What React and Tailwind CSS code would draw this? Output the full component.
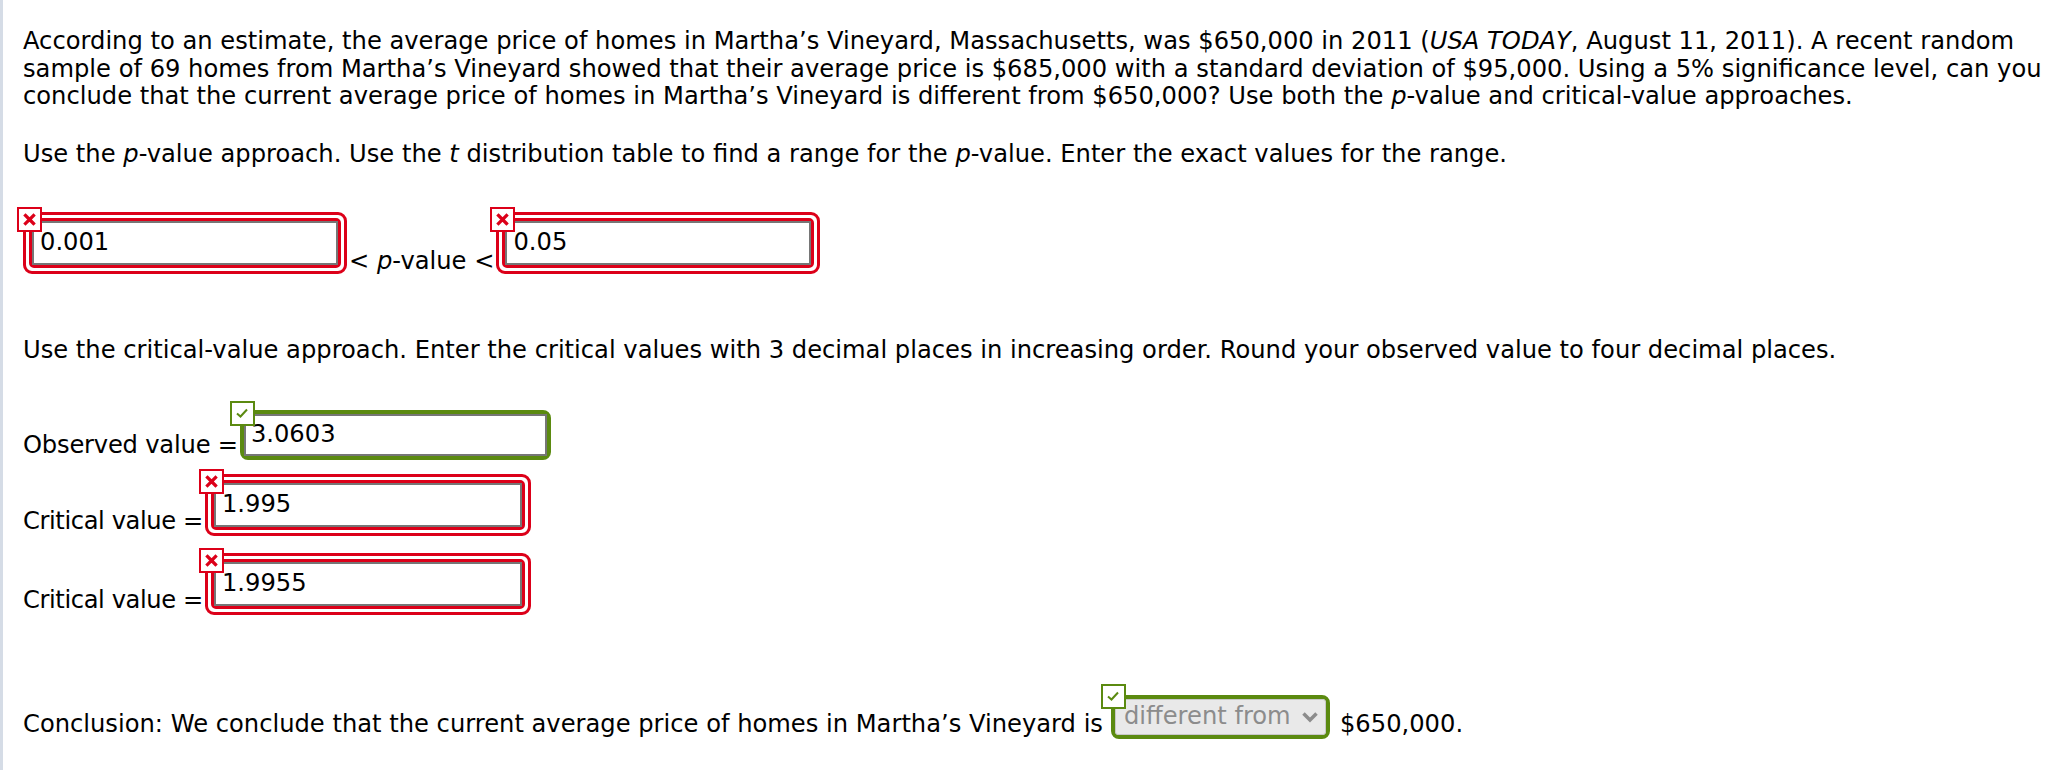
// Homework question page: hypothesis test with graded answer boxes.

const RED = 'border-[#dc0019]';

function XIcon() {
  return (
    <svg width="13" height="13" viewBox="0 0 13 13">
      <path d="M2.5 2.5 L10.5 10.5 M10.5 2.5 L2.5 10.5" stroke="#dc0019" strokeWidth="3.2" strokeLinecap="square" />
    </svg>
  );
}

function CheckIcon() {
  return (
    <svg width="14" height="12" viewBox="0 0 14 12">
      <path d="M2 6.5 L5.5 9.5 L12 2.5" stroke="#5b8a10" strokeWidth="2" fill="none" />
    </svg>
  );
}

// Little graded marker sitting over the top-left corner of a box
function Mark({ ok, className = '' }) {
  return (
    <div className={`absolute z-10 flex h-[25px] w-[25px] items-center justify-center border-2 bg-white ${ok ? 'border-[#5b8a10]' : 'border-[#dc0019]'} ${className}`}>
      {ok ? <CheckIcon /> : <XIcon />}
    </div>
  );
}

function WrongBox({ value, w }) {
  return (
    <div className={`relative shrink-0 rounded-[9px] border-[3px] ${RED} bg-white p-[3px] ${w}`}>
      <div className={`rounded-[5px] border-[3px] ${RED}`}>
        <div className="flex h-[44px] items-center border-2 border-[#767676] bg-white px-[6px]">{value}</div>
      </div>
      <Mark className="-left-[9px] -top-[8px]" />
    </div>
  );
}

function RightBox({ value }) {
  return (
    <div className="relative h-[50px] w-[311px] shrink-0 rounded-[8px] border-4 border-[#5b8a10] bg-white">
      <div className="flex h-full items-center border-2 border-[#767676] px-[5px]">{value}</div>
      <Mark ok className="-left-[14px] -top-[13px]" />
    </div>
  );
}

function Label({ children, className = '' }) {
  return <span className={`whitespace-nowrap leading-[27.5px] ${className}`}>{children}</span>;
}

export default function App() {
  return (
    <div className="flex min-h-[770px] bg-white font-['DejaVu_Sans',Verdana,sans-serif] text-[24.2px] leading-[27.5px] text-black">
      <div className="w-[3px] shrink-0 bg-[#d5dce6]" />
      <div className="pl-[20px] pt-[28px]">
        <p className="whitespace-nowrap">
          According to an estimate, the average price of homes in Martha’s Vineyard, Massachusetts, was $650,000 in 2011 (<i>USA TODAY</i>, August 11, 2011). A recent random
          <br />
          sample of 69 homes from Martha’s Vineyard showed that their average price is $685,000 with a standard deviation of $95,000. Using a 5% significance level, can you
          <br />
          conclude that the current average price of homes in Martha’s Vineyard is different from $650,000? Use both the <i>p</i>-value and critical-value approaches.
        </p>

        <p className="mt-[30px] whitespace-nowrap">
          Use the <i>p</i>-value approach. Use the <i>t</i> distribution table to find a range for the <i>p</i>-value. Enter the exact values for the range.
        </p>

        <div className="mt-[44px] flex items-end">
          <WrongBox value="0.001" w="w-[324px]" />
          <span className="mx-[2px] mb-[-1px] whitespace-nowrap">&lt; <i>p</i>-value &lt;</span>
          <WrongBox value="0.05" w="w-[324px]" />
        </div>

        <p className="mt-[63px] whitespace-nowrap">
          Use the critical-value approach. Enter the critical values with 3 decimal places in increasing order. Round your observed value to four decimal places.
        </p>

        <div className="mt-[45px] flex items-end">
          <Label className="tracking-[-0.2px]">Observed value =</Label>
          <div className="ml-[2px]"><RightBox value="3.0603" /></div>
        </div>

        <div className="mt-[14px] flex items-end">
          <Label className="tracking-[-0.4px]">Critical value =</Label>
          <div className="ml-[2px]"><WrongBox value="1.995" w="w-[326px]" /></div>
        </div>

        <div className="mt-[17px] flex items-end">
          <Label className="tracking-[-0.4px]">Critical value =</Label>
          <div className="ml-[2px]"><WrongBox value="1.9955" w="w-[326px]" /></div>
        </div>

        <div className="mt-[80px] flex items-end">
          <Label>Conclusion: We conclude that the current average price of homes in Martha’s Vineyard is</Label>
          <div className="relative ml-[8px] h-[44px] w-[219px] shrink-0 rounded-[8px] border-4 border-[#5b8a10] bg-[#e9e9e9]">
            <div className="flex h-full items-center justify-between rounded-[3px] border border-[#c8c8c8] pl-[8px] pr-[6px] text-[#8c8c8c]">
              <span className="whitespace-nowrap">different from</span>
              <svg width="18" height="12" viewBox="0 0 18 12" className="shrink-0">
                <path d="M2.5 2.5 L9 9 L15.5 2.5" stroke="#8c8c8c" strokeWidth="3.5" fill="none" />
              </svg>
            </div>
            <Mark ok className="-left-[14px] -top-[15px]" />
          </div>
          <Label>
            <span className="ml-[10px]">$650,000.</span>
          </Label>
        </div>
      </div>
    </div>
  );
}
